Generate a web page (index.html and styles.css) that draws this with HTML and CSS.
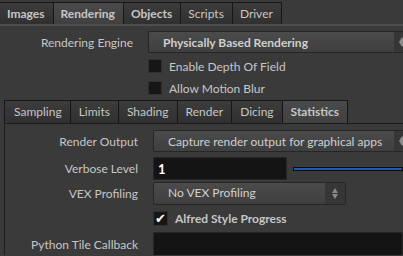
FILE: index.html
```html
<!DOCTYPE html>
<html>
<head>
  <title>Mantra</title>
  <link rel="stylesheet" href="styles.css">
</head>
<body>
  <div class="tabs top-tabs">
    <div class="tab bold">Images</div>
    <div class="tab bold active">Rendering</div>
    <div class="tab bold">Objects</div>
    <div class="tab">Scripts</div>
    <div class="tab">Driver</div>
  </div>

  <div class="section top-section">
    <div class="row">
      <span class="label">Rendering Engine</span>
      <div class="menu wide bold">Physically Based Rendering<span class="arrows"></span></div>
    </div>
    <div class="row check-row">
      <span class="label"></span>
      <span class="checkbox"></span>
      <span class="check-text">Enable Depth Of Field</span>
    </div>
    <div class="row check-row">
      <span class="label"></span>
      <span class="checkbox"></span>
      <span class="check-text">Allow Motion Blur</span>
    </div>
  </div>

  <div class="tabs inner-tabs">
    <div class="tab">Sampling</div>
    <div class="tab">Limits</div>
    <div class="tab">Shading</div>
    <div class="tab">Render</div>
    <div class="tab">Dicing</div>
    <div class="tab bold active">Statistics</div>
  </div>

  <div class="panel">
    <div class="row">
      <span class="label">Render Output</span>
      <div class="menu wide">Capture render output for graphical apps<span class="arrows"></span></div>
    </div>
    <div class="row tight">
      <span class="label">Verbose Level</span>
      <div class="field num">1</div>
      <div class="slider"><div class="track"></div></div>
    </div>
    <div class="row">
      <span class="label">VEX Profiling</span>
      <div class="menu short">No VEX Profiling<span class="arrows"></span></div>
    </div>
    <div class="row check-row">
      <span class="label"></span>
      <span class="checkbox checked">&#10004;</span>
      <span class="check-text bold">Alfred Style Progress</span>
    </div>
    <div class="row">
      <span class="label">Python Tile Callback</span>
      <div class="field long"></div>
    </div>
  </div>
</body>
</html>
```

FILE: styles.css
```css
body {
  margin: 0;
  width: 403px;
  height: 256px;
  overflow: hidden;
  background-color: #3a3a3a;
  color: #c6c6c6;
  font-family: "Lato", "Open Sans", sans-serif;
  font-size: 12px;
}

.bold {
  font-weight: bold;
}

.tabs {
  display: flex;
}

.tab {
  height: 21px;
  line-height: 21px;
  padding: 0 8px;
  background: linear-gradient(#3c3c3c, #303030);
  border: 1px solid #161616;
  border-bottom: none;
  margin-right: -1px;
}

.tab.active {
  background: linear-gradient(#4a4a4a, #404040);
}

.top-tabs {
  padding-top: 2px;
  border-bottom: 2px solid #4e4e4e;
}

.top-tabs .tab {
  padding: 0 8px 0 7px;
}

.top-tabs .tab:first-child {
  border-left: none;
}

.section {
  padding-top: 5px;
}

.row {
  display: flex;
  align-items: center;
  margin-bottom: 5px;
}

.row.tight {
  margin-bottom: 2px;
}

.label {
  width: 133px;
  text-align: right;
  padding-right: 15px;
  flex-shrink: 0;
}

.menu {
  position: relative;
  height: 20px;
  line-height: 20px;
  padding-left: 14px;
  background: linear-gradient(#4b4b4b, #3f3f3f);
  border: 1px solid #262626;
  border-radius: 2px;
  color: #cfcfcf;
  box-sizing: border-box;
}

.menu.wide {
  flex: 1;
  height: 22px;
  line-height: 21px;
  margin-right: -20px;
}

.menu.short {
  width: 193px;
  height: 23px;
}

.arrows {
  position: absolute;
  right: 0;
  top: 0;
  bottom: 0;
  width: 20px;
  background: #363636;
}

.arrows::before,
.arrows::after {
  content: "";
  position: absolute;
  left: 50%;
  margin-left: -3px;
  border-left: 3px solid transparent;
  border-right: 3px solid transparent;
}

.arrows::before {
  top: 5px;
  border-bottom: 5px solid #8a8a8a;
}

.arrows::after {
  bottom: 5px;
  border-top: 5px solid #8a8a8a;
}

.menu.wide .arrows {
  right: 12px;
  width: 16px;
}

.check-row {
  height: 16px;
  margin-bottom: 6px;
}

.checkbox {
  width: 12px;
  height: 12px;
  background: #161616;
  border: 1px solid #303030;
  margin-right: 7px;
  flex-shrink: 0;
}

.top-section .check-row:last-child {
  margin-bottom: 4px;
}

.inner-tabs {
  margin-left: 4px;
}

.inner-tabs .tab {
  height: 22px;
  line-height: 22px;
  padding: 0 8px;
}

.inner-tabs .tab:first-child {
  padding-left: 9px;
}

.panel {
  margin-left: 4px;
  border-left: 1px solid #1c1c1c;
  border-top: 1px solid #1c1c1c;
  padding-top: 6px;
  height: 125px;
  overflow: hidden;
}

.field {
  height: 23px;
  line-height: 23px;
  background: #141414;
  border: 1px solid #262626;
  box-sizing: border-box;
  padding-left: 4px;
  color: #ffffff;
}

.field.num {
  width: 134px;
  font-weight: bold;
  font-size: 13px;
}

.field.long {
  flex: 1;
  height: 25px;
}

.slider {
  flex: 1;
  padding-left: 6px;
}

.track {
  height: 2px;
  background: #1a5bb4;
  border: 1px solid #0c0c0c;
}

.checkbox.checked {
  width: 13px;
  height: 13px;
  color: #ffffff;
  font-size: 13px;
  line-height: 13px;
  text-align: center;
}
```
